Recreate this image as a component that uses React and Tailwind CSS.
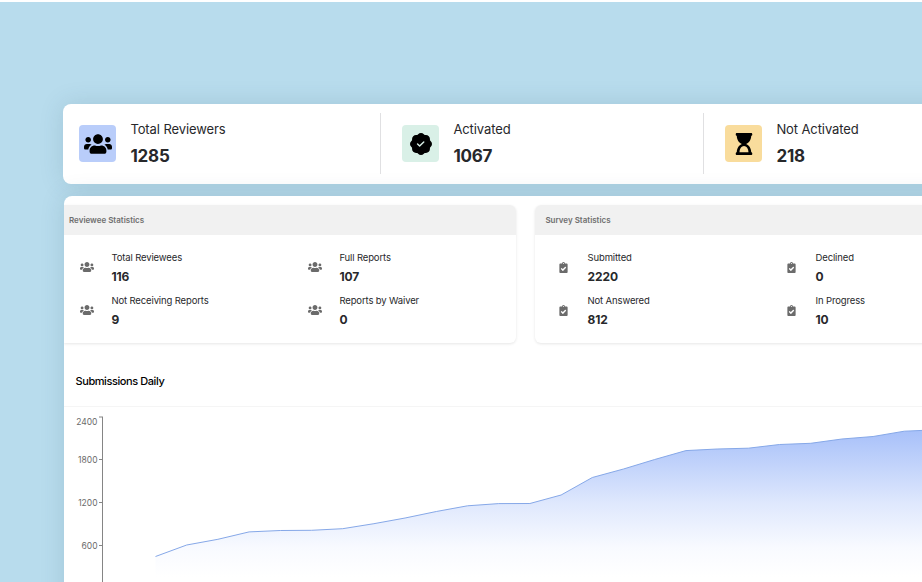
import { FaUsers, FaHourglassStart, FaClipboardCheck } from 'react-icons/fa';
import { BsPatchCheckFill } from 'react-icons/bs';

const summary = [
  { label: 'Total Reviewers', value: 1285, bg: 'bg-[#b9cdfa]', icon: <FaUsers size={28} /> },
  { label: 'Activated', value: 1067, bg: 'bg-[#d9f0e7]', icon: <BsPatchCheckFill size={22} /> },
  { label: 'Not Activated', value: 218, bg: 'bg-[#f9dc9c]', icon: <FaHourglassStart size={22} /> },
];

const revieweeStats = [
  { label: 'Total Reviewees', value: 116 },
  { label: 'Full Reports', value: 107 },
  { label: 'Not Receiving Reports', value: 9 },
  { label: 'Reports by Waiver', value: 0 },
];

const surveyStats = [
  { label: 'Submitted', value: 2220 },
  { label: 'Declined', value: 0 },
  { label: 'Not Answered', value: 812 },
  { label: 'In Progress', value: 10 },
];

const ticks = [
  { label: '2400', y: 10, textY: 18 },
  { label: '1800', y: 52.5, textY: 56 },
  { label: '1200', y: 95.5, textY: 99 },
  { label: '600', y: 138.5, textY: 141.5 },
];

const heights = [
  149.5, 138, 132.3, 124.9, 123.5, 123.3, 121.7, 116.7, 111, 104.5, 98.8, 96.6, 96.5,
  88, 70.5, 62, 52.5, 43.6, 42, 41.2, 37.5, 36.3, 32, 29.5, 24.2, 22.8,
];

const STEP = 31.2;
const START = 91.5;
const line = heights.map((y, i) => `${START + i * STEP},${y}`).join(' ');
const end = START + (heights.length - 1) * STEP;

function SummaryItem({ item }) {
  return (
    <div className="flex w-[323px] shrink-0 items-start">
      <div className={`mt-[12px] flex h-[37px] w-[36.5px] items-center justify-center rounded-[4px] text-black ${item.bg}`}>
        {item.icon}
      </div>
      <div className="ml-[14.5px] mt-[6px]">
        <p className="text-[13px] leading-[20px] tracking-[-0.1px] text-[#27282b]">{item.label}</p>
        <p className="mt-[6px] text-[17px] font-bold leading-[22px] tracking-[-0.2px] text-[#27282b]">{item.value}</p>
      </div>
    </div>
  );
}

function StatsPanel({ title, stats, icon, className, titleClass, bodyClass }) {
  return (
    <section className={`h-[138px] shrink-0 overflow-hidden bg-white shadow-[0_1px_3px_rgba(0,0,0,0.1)] ${className}`}>
      <h2 className={`h-[30px] bg-[#f1f1f1] text-[8px] font-semibold leading-[30px] text-[#6f6f6f] ${titleClass}`}>
        {title}
      </h2>
      <div className={`grid grid-cols-[228px_228px] gap-y-[3px] pt-[13px] ${bodyClass}`}>
        {stats.map((stat) => (
          <div key={stat.label} className="flex h-[40px] items-center">
            <div className="flex w-[14px] justify-center text-[#6b6b6b]">{icon}</div>
            <div className="ml-[17px]">
              <p className="text-[9.5px] leading-[16px] tracking-[-0.13px] text-[#27282b]">{stat.label}</p>
              <p className="mt-[2px] text-[12px] font-bold leading-[18px] tracking-[-0.1px] text-[#27282b]">{stat.value}</p>
            </div>
          </div>
        ))}
      </div>
    </section>
  );
}

function SubmissionsChart() {
  return (
    <svg width="880" height="176" className="block">
      <defs>
        <linearGradient id="area" gradientUnits="userSpaceOnUse" x1="0" y1="23" x2="0" y2="170">
          <stop offset="0" stopColor="#a7c0f9" />
          <stop offset="0.5" stopColor="#dfe8fd" />
          <stop offset="0.8" stopColor="#f8faff" />
          <stop offset="1" stopColor="#ffffff" />
        </linearGradient>
      </defs>
      <polygon points={`${START},176 ${line} ${end},176`} fill="url(#area)" />
      <polyline points={line} fill="none" stroke="#86a8e8" strokeWidth="1" />
      <path d="M38.5 10V176" stroke="#858585" strokeWidth="1" />
      {ticks.map((tick) => (
        <g key={tick.label}>
          <path d={`M35 ${tick.y}h4`} stroke="#858585" strokeWidth="1" />
          <text x="33.5" y={tick.textY} textAnchor="end" fontSize="8.5" fill="#6b6b6b">
            {tick.label}
          </text>
        </g>
      ))}
    </svg>
  );
}

export default function App() {
  return (
    <div className="h-[582px] w-[922px] overflow-hidden border-t-2 border-white bg-[#b8dced] pl-[63px] pt-[102px] font-[Inter,sans-serif]">
      <div className="flex h-[80px] w-[985px] rounded-[8px] bg-white pl-[16.4px] pt-[9px] shadow-[0_0_24px_rgba(40,80,100,0.15)]">
        {summary.map((item, i) => (
          <div key={item.label} className="flex shrink-0">
            {i > 0 && <div className="-ml-[22px] mr-[21px] h-[61px] w-px bg-[#e0e0e2]" />}
            <SummaryItem item={item} />
          </div>
        ))}
      </div>

      <main className="ml-px mt-[12px] h-[420px] w-[985px] overflow-hidden rounded-tl-[8px] bg-white pt-[9px] shadow-[0_0_24px_rgba(40,80,100,0.15)]">
        <div className="flex gap-[19px]">
          <StatsPanel
            title="Reviewee Statistics"
            stats={revieweeStats}
            icon={<FaUsers size={14} className="mb-[2px] shrink-0" />}
            className="w-[452px] rounded-r-[6px]"
            titleClass="pl-[5px]"
            bodyClass="pl-[16.4px]"
          />
          <StatsPanel
            title="Survey Statistics"
            stats={surveyStats}
            icon={<FaClipboardCheck size={11} className="mb-[2px] shrink-0" />}
            className="w-[470px] rounded-[6px]"
            titleClass="pl-[10.4px]"
            bodyClass="pl-[21.5px]"
          />
        </div>
        <h2 className="mt-[28px] h-[36px] border-b border-[#f5f5f5] pl-[11.5px] text-[11px] font-medium leading-[20px] tracking-[-0.42px] text-black">
          Submissions Daily
        </h2>
        <SubmissionsChart />
      </main>
    </div>
  );
}
